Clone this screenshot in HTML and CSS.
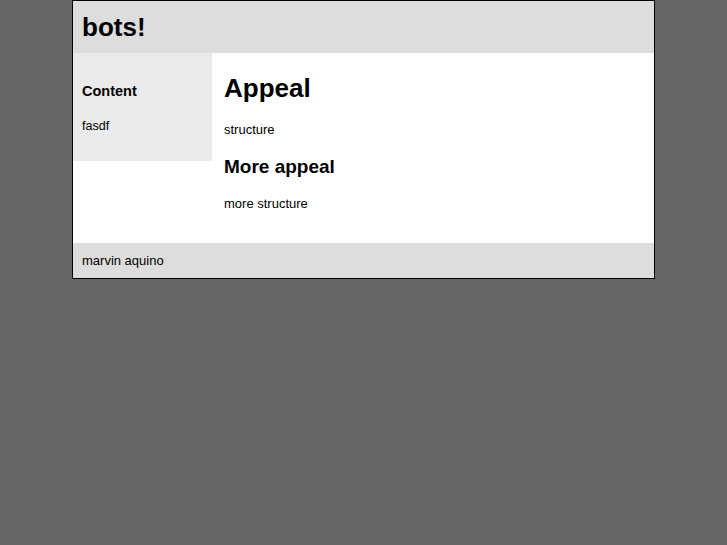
FILE: index.html
```html
<!DOCTYPE html>
<html lang="en">
<head>
  <meta charset="UTF-8">
  <title>bots!</title>
  <link rel="stylesheet" href="styles.css">
</head>
<body>

  <div class="page">
    <div class="header">
      <h1>bots!</h1>
    </div>

    <div class="middle">
      <div class="sidebar">
        <h3>Content</h3>
        <p>fasdf</p>
      </div>

      <div class="content">
        <h2>Appeal</h2>
        <p>structure</p>
        <h4>More appeal</h4>
        <p>more structure</p>
      </div>
    </div>

    <div class="footer">marvin aquino</div>
  </div>

</body>
</html>
```

FILE: styles.css
```css
body {
  margin: 0;
  background: #666;
  font-family: "Liberation Sans", Arial, sans-serif;
  color: #000;
}

.page {
  width: 581px;
  margin: 0 auto;
  border: 1px solid #000;
  background: #fff;
}

.header {
  background: #ddd;
  height: 52px;
  padding: 0 9px;
  display: flex;
  align-items: center;
}

.header h1 {
  margin: 0;
  font-size: 26px;
}

.middle {
  display: flex;
  align-items: flex-start;
}

.sidebar {
  width: 130px;
  padding: 30px 0 27px 9px;
  background: #ebebeb;
}

.sidebar h3 {
  margin: 0 0 19px;
  font-size: 14.5px;
  line-height: 17px;
}

.sidebar p {
  margin: 0;
  font-size: 12.5px;
  line-height: 15px;
}

.content {
  flex: 1;
  padding: 20px 12px 32px;
}

.content h2 {
  margin: 0 0 19px;
  font-size: 26px;
  line-height: 30px;
}

.content h4 {
  margin: 0 0 18px;
  font-size: 19px;
  line-height: 22px;
}

.content p {
  margin: 0 0 19px;
  font-size: 13px;
  line-height: 15px;
}

.content p:last-child {
  margin-bottom: 0;
}

.footer {
  background: #ddd;
  height: 35px;
  padding: 0 9px;
  display: flex;
  align-items: center;
  font-size: 13px;
}
```
